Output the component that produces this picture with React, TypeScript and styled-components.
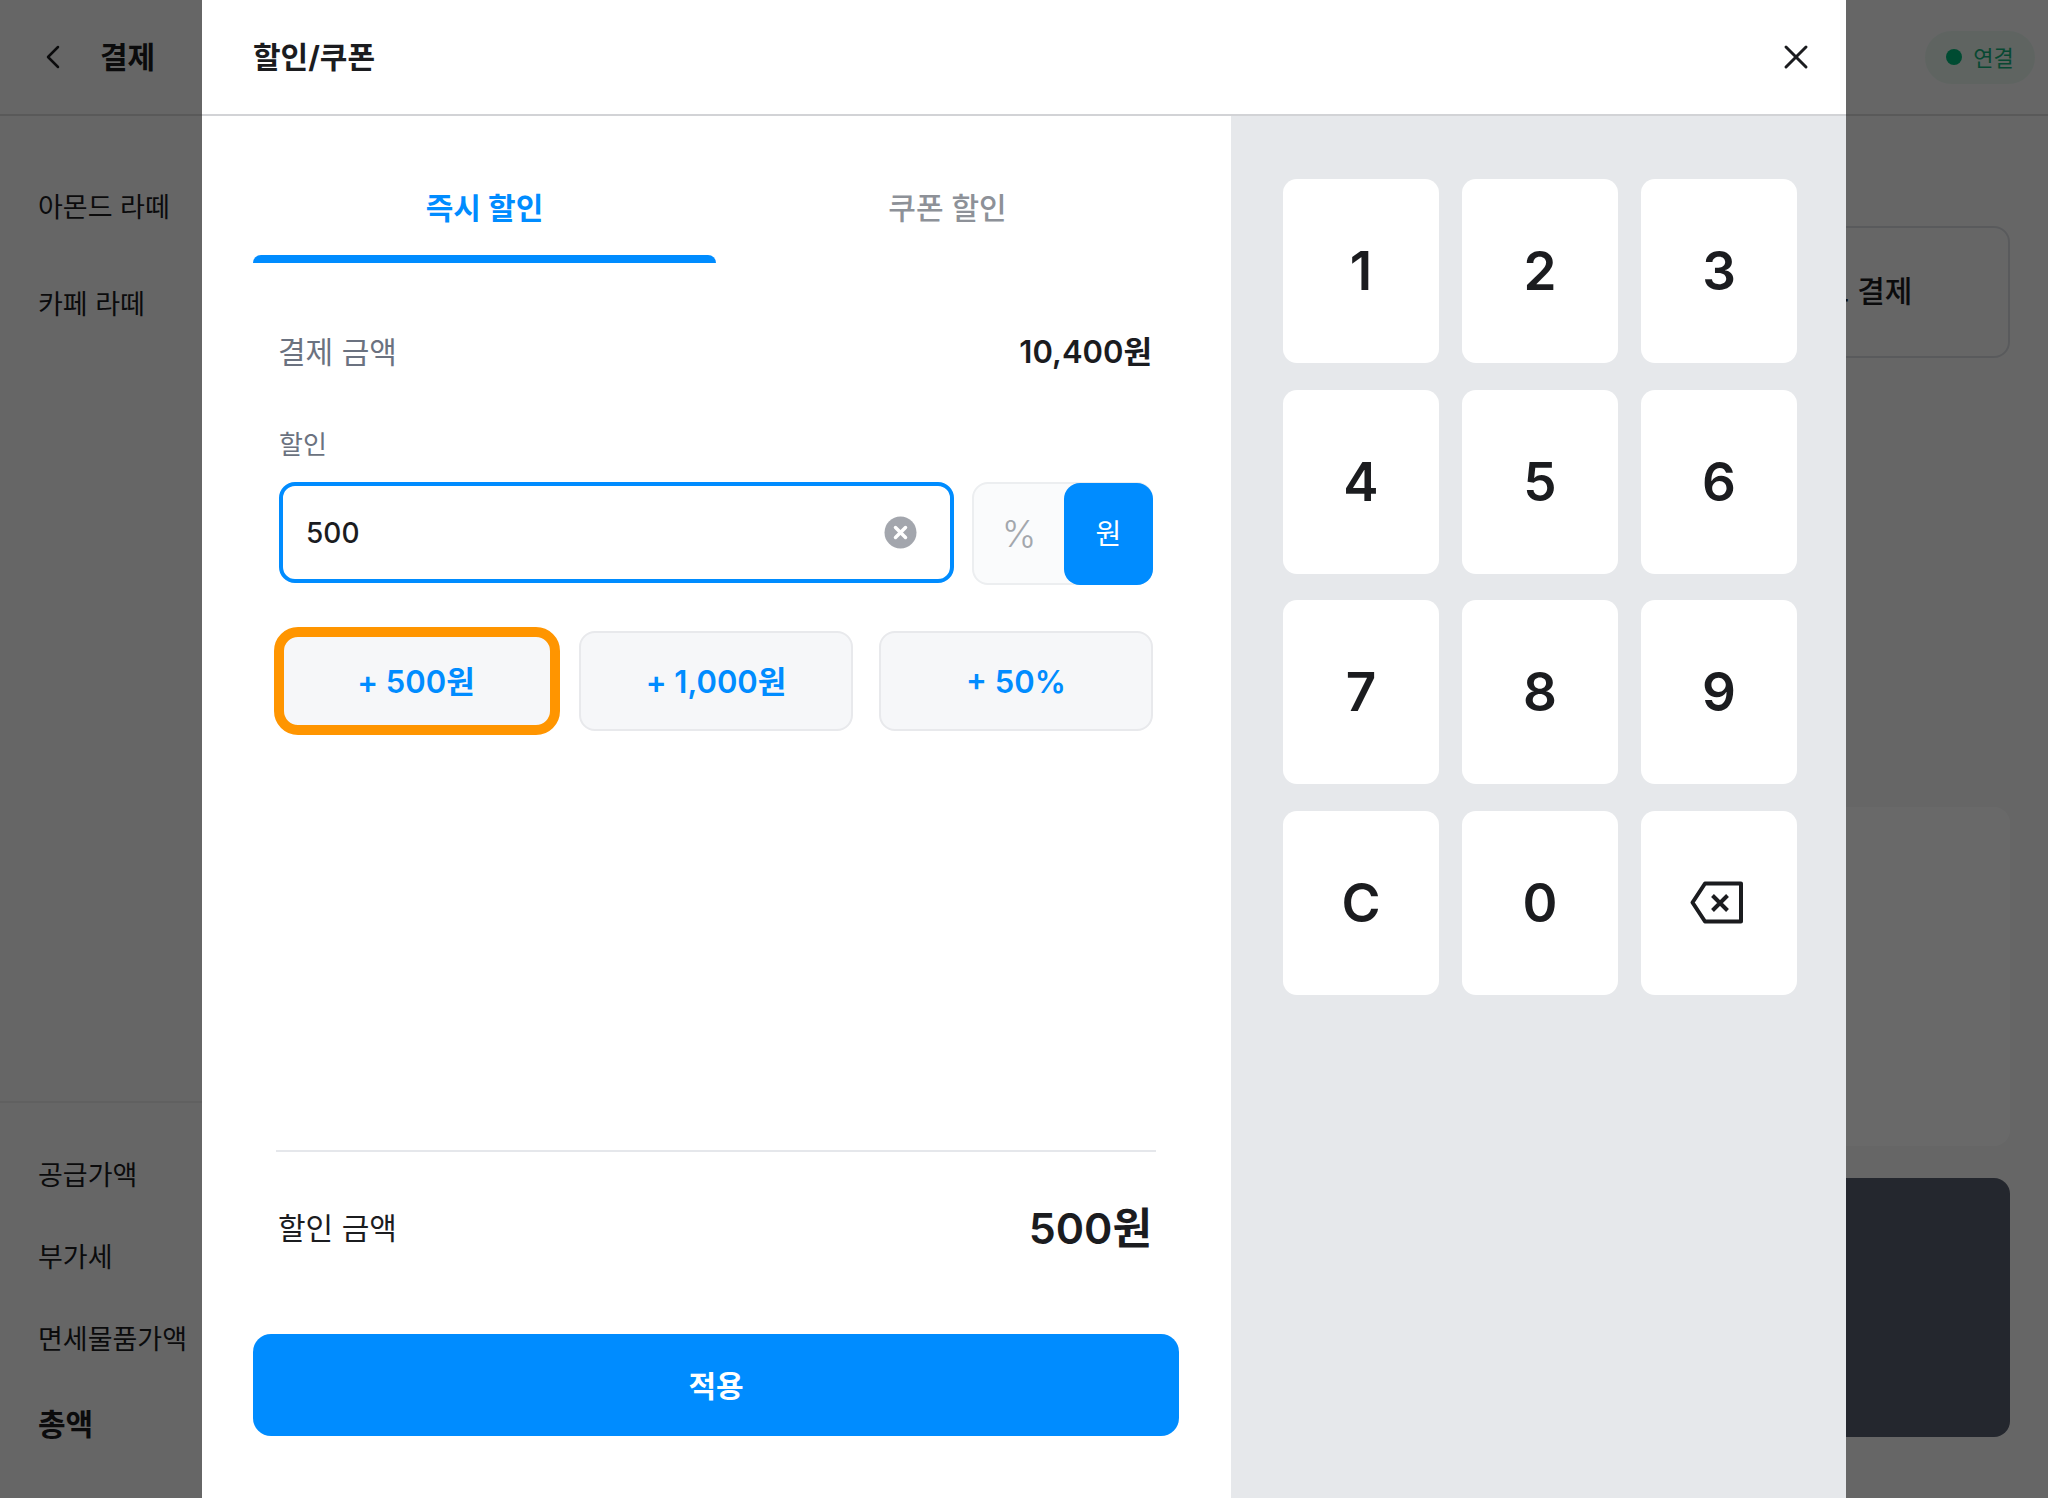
import styled, { createGlobalStyle } from "styled-components";
import { ChevronLeft, X } from "lucide-react";

const GlobalStyle = createGlobalStyle`
  html, body {
    margin: 0;
    padding: 0;
    background: #f7f8f8;
  }
  * {
    box-sizing: border-box;
  }
  body {
    font-family: Inter, "Noto Sans CJK KR", sans-serif;
    color: #1b1c1f;
  }
`;

const Page = styled.div`
  position: relative;
  width: 2048px;
  height: 1498px;
  overflow: hidden;
  display: flex;
  flex-direction: column;
`;

const PageHeader = styled.header`
  height: 116px;
  flex-shrink: 0;
  border-bottom: 2px solid #d8d8d8;
  display: flex;
  align-items: center;
  justify-content: space-between;
  padding: 0 13px 0 33px;
`;

const PageTitle = styled.div`
  display: flex;
  align-items: center;
  gap: 27px;
  font-size: 30px;
  font-weight: 700;

  span {
    padding-bottom: 5px;
  }
`;

const ConnectionPill = styled.div`
  width: 110px;
  height: 53px;
  border-radius: 27px;
  background: #e6f3ec;
  display: flex;
  align-items: center;
  justify-content: center;
  gap: 11px;
  font-size: 22px;
  color: #14b07a;

  span:last-child {
    padding-bottom: 2px;
  }
`;

const ConnectionDot = styled.span`
  width: 16px;
  height: 16px;
  border-radius: 50%;
  background: #00b679;
`;

const PageBody = styled.div`
  flex: 1;
  display: flex;
  justify-content: space-between;
`;

const OrderPane = styled.section`
  width: 1000px;
  display: flex;
  flex-direction: column;
  justify-content: space-between;
`;

const OrderList = styled.div`
  display: flex;
  flex-direction: column;
  gap: 58px;
  padding: 70px 38px 0;
  font-size: 27px;
`;

const Totals = styled.div`
  border-top: 2px solid #e8e8e8;
  height: 397px;
  padding: 53px 38px 0;
  display: flex;
  flex-direction: column;
  gap: 42px;
  font-size: 27px;
`;

const TotalRow = styled.div<{ $strong?: boolean }>`
  line-height: 40px;
  font-size: ${(props) => (props.$strong ? "30px" : "27px")};
  font-weight: ${(props) => (props.$strong ? 700 : 400)};
  margin-top: ${(props) => (props.$strong ? "2px" : "0")};
`;

const PayPane = styled.section`
  width: 300px;
  padding: 110px 38px 61px 0;
  display: flex;
  flex-direction: column;
`;

const PayMethod = styled.div`
  height: 132px;
  border: 2px solid #d9dbe0;
  border-radius: 16px;
  display: flex;
  align-items: center;
  padding: 0 0 6px 104px;
  font-size: 30px;
  font-weight: 500;
  white-space: nowrap;
  margin-left: -60px;
`;

const ReceiptCard = styled.div`
  height: 339px;
  margin-top: 449px;
  background: #ffffff;
  border-radius: 16px;
`;

const PayButton = styled.div`
  flex: 1;
  margin-top: 32px;
  background: #595f70;
  border-radius: 16px;
`;

const Overlay = styled.div`
  position: absolute;
  inset: 0;
  background: rgba(0, 0, 0, 0.59);
`;

const Modal = styled.div`
  position: absolute;
  top: 0;
  left: 202px;
  width: 1644px;
  height: 1498px;
  background: #ffffff;
  display: flex;
  flex-direction: column;
`;

const ModalHeader = styled.header`
  height: 116px;
  flex-shrink: 0;
  border-bottom: 2px solid #d2d3d6;
  display: flex;
  align-items: center;
  justify-content: space-between;
  padding: 0 30px 0 51px;
`;

const ModalTitle = styled.h1`
  margin: 0;
  padding-bottom: 5px;
  font-size: 30px;
  font-weight: 700;
  color: #1b1c1f;
`;

const ModalBody = styled.div`
  flex: 1;
  display: flex;
  min-height: 0;
`;

const DiscountPanel = styled.section`
  width: 1029px;
  padding: 0 52px 62px 51px;
  display: flex;
  flex-direction: column;
`;

const Tabs = styled.div`
  display: grid;
  grid-template-columns: 1fr 1fr;
  height: 147px;
`;

const Tab = styled.div<{ $active?: boolean }>`
  position: relative;
  display: flex;
  align-items: flex-start;
  justify-content: center;
  padding-top: 72px;
  font-size: 30px;
  line-height: 40px;
  font-weight: ${(props) => (props.$active ? 700 : 500)};
  color: ${(props) => (props.$active ? "#008cff" : "#8d9198")};

  ${(props) =>
    props.$active &&
    `&::after {
      content: "";
      position: absolute;
      left: 0;
      right: 0;
      bottom: 0;
      height: 8px;
      background: #008cff;
      border-radius: 8px 8px 0 0;
    }`}
`;

const AmountRow = styled.div`
  display: flex;
  align-items: center;
  justify-content: space-between;
  margin: 67px 27px 0 25px;
  height: 40px;
  font-size: 30px;
`;

const AmountLabel = styled.span`
  color: #6b7280;
`;

const AmountValue = styled.span`
  padding-bottom: 2px;
  font-size: 31px;
  font-weight: 600;
`;

const FieldLabel = styled.label`
  display: block;
  margin: 58px 0 0 26px;
  font-size: 26px;
  line-height: 34px;
  color: #6b7280;
`;

const InputRow = styled.div`
  display: flex;
  align-items: flex-start;
  gap: 18px;
  margin: 20px 26px 0;
`;

const AmountInput = styled.div`
  flex: 1;
  height: 101px;
  border: 4px solid #008cff;
  border-radius: 16px;
  display: flex;
  align-items: center;
  justify-content: space-between;
  padding: 0 33px 0 23px;
  font-size: 28px;
  font-weight: 500;
`;

const ClearIcon = styled.svg`
  width: 33px;
  height: 33px;
`;

const UnitToggle = styled.div`
  width: 181px;
  height: 103px;
  display: flex;
  border: 2px solid #eceef0;
  border-radius: 16px;
  background: #fafbfc;
`;

const UnitOption = styled.div<{ $active?: boolean }>`
  display: flex;
  align-items: center;
  justify-content: center;
  width: ${(props) => (props.$active ? "89px" : "90px")};
  margin: ${(props) => (props.$active ? "-1px -2px -2px 0" : "0")};
  padding-bottom: ${(props) => (props.$active ? "4px" : "0")};
  font-size: ${(props) => (props.$active ? "28px" : "37px")};
  font-weight: ${(props) => (props.$active ? 400 : 300)};
  color: ${(props) => (props.$active ? "#ffffff" : "#a3a7ad")};
  background: ${(props) => (props.$active ? "#008cff" : "transparent")};
  border-radius: 16px;
`;

const QuickRow = styled.div`
  display: grid;
  grid-template-columns: repeat(3, 1fr);
  gap: 26px;
  margin: 46px 26px 0;
`;

const QuickButton = styled.div<{ $focused?: boolean }>`
  position: relative;
  height: 100px;
  border: 2px solid #e8e9ec;
  border-radius: 16px;
  background: #f6f7f9;
  display: flex;
  align-items: center;
  justify-content: center;
  padding-top: 1px;
  font-size: 31px;
  line-height: 44px;
  font-weight: 600;
  color: #008cff;

  ${(props) =>
    props.$focused &&
    `&::after {
      content: "";
      position: absolute;
      inset: -6px -9px -6px -7px;
      border: 10px solid #ff9500;
      border-radius: 24px;
    }`}
`;

const Spacer = styled.div`
  flex: 1;
`;

const Divider = styled.hr`
  width: 880px;
  height: 2px;
  margin: 0 0 0 23px;
  border: none;
  background: #e5e7eb;
`;

const ResultRow = styled.div`
  display: flex;
  align-items: center;
  justify-content: space-between;
  height: 60px;
  margin: 44px 27px 78px 25px;
  font-size: 30px;
`;

const ResultValue = styled.span`
  padding-bottom: 2px;
  font-size: 43px;
  font-weight: 600;
`;

const ApplyButton = styled.button`
  height: 102px;
  padding: 0 0 3px;
  border: none;
  border-radius: 18px;
  background: #008cff;
  color: #ffffff;
  font-family: inherit;
  font-size: 30px;
  font-weight: 700;
`;

const KeypadPanel = styled.section`
  flex: 1;
  background: #e6e8eb;
  padding: 63px 48px 0 52px;
`;

const Keypad = styled.div`
  display: grid;
  grid-template-columns: repeat(3, 156px);
  grid-auto-rows: 184px;
  column-gap: 23px;
  row-gap: 26.5px;
`;

const Key = styled.div`
  background: #ffffff;
  border-radius: 14px;
  display: flex;
  align-items: center;
  justify-content: center;
  font-size: 53px;
  font-weight: 600;
  color: #1b1c1f;
`;

const BackspaceIcon = styled.svg`
  width: 53px;
  height: 43px;
  margin-right: 5px;
`;

const keys = ["1", "2", "3", "4", "5", "6", "7", "8", "9", "C", "0"];
const quickAmounts = ["+ 500원", "+ 1,000원", "+ 50%"];

const App = () => {
  return (
    <>
      <GlobalStyle />
      <Page>
        <PageHeader>
          <PageTitle>
            <ChevronLeft size={40} strokeWidth={1.5} />
            <span>결제</span>
          </PageTitle>
          <ConnectionPill>
            <ConnectionDot />
            <span>연결</span>
          </ConnectionPill>
        </PageHeader>
        <PageBody>
          <OrderPane>
            <OrderList>
              <div>아몬드 라떼</div>
              <div>카페 라떼</div>
            </OrderList>
            <Totals>
              <TotalRow>공급가액</TotalRow>
              <TotalRow>부가세</TotalRow>
              <TotalRow>면세물품가액</TotalRow>
              <TotalRow $strong>총액</TotalRow>
            </Totals>
          </OrderPane>
          <PayPane>
            <PayMethod>카드 결제</PayMethod>
            <ReceiptCard />
            <PayButton />
          </PayPane>
        </PageBody>

        <Overlay />

        <Modal>
          <ModalHeader>
            <ModalTitle>할인/쿠폰</ModalTitle>
            <X size={40} strokeWidth={1.8} color="#1b1c1f" />
          </ModalHeader>
          <ModalBody>
            <DiscountPanel>
              <Tabs>
                <Tab $active>즉시 할인</Tab>
                <Tab>쿠폰 할인</Tab>
              </Tabs>
              <AmountRow>
                <AmountLabel>결제 금액</AmountLabel>
                <AmountValue>10,400원</AmountValue>
              </AmountRow>
              <FieldLabel>할인</FieldLabel>
              <InputRow>
                <AmountInput>
                  500
                  <ClearIcon viewBox="0 0 33 33">
                    <circle cx="16.5" cy="16.5" r="16" fill="#a3a6ad" />
                    <path
                      d="M11.5 11.5l10 10M21.5 11.5l-10 10"
                      stroke="#ffffff"
                      strokeWidth="3.5"
                      strokeLinecap="round"
                    />
                  </ClearIcon>
                </AmountInput>
                <UnitToggle>
                  <UnitOption>%</UnitOption>
                  <UnitOption $active>원</UnitOption>
                </UnitToggle>
              </InputRow>
              <QuickRow>
                {quickAmounts.map((amount, index) => (
                  <QuickButton key={amount} $focused={index === 0}>
                    {amount}
                  </QuickButton>
                ))}
              </QuickRow>
              <Spacer />
              <Divider />
              <ResultRow>
                <span>할인 금액</span>
                <ResultValue>500원</ResultValue>
              </ResultRow>
              <ApplyButton>적용</ApplyButton>
            </DiscountPanel>
            <KeypadPanel>
              <Keypad>
                {keys.map((key) => (
                  <Key key={key}>{key}</Key>
                ))}
                <Key>
                  <BackspaceIcon viewBox="0 0 53 43" fill="none">
                    <path
                      d="M2.5 21.5L15 2.5H51V40.5H15L2.5 21.5Z"
                      stroke="#1b1c1f"
                      strokeWidth="4"
                      strokeLinejoin="round"
                    />
                    <path
                      d="M22.5 14.5l15 15M37.5 14.5l-15 15"
                      stroke="#1b1c1f"
                      strokeWidth="4"
                    />
                  </BackspaceIcon>
                </Key>
              </Keypad>
            </KeypadPanel>
          </ModalBody>
        </Modal>
      </Page>
    </>
  );
};

export default App;
